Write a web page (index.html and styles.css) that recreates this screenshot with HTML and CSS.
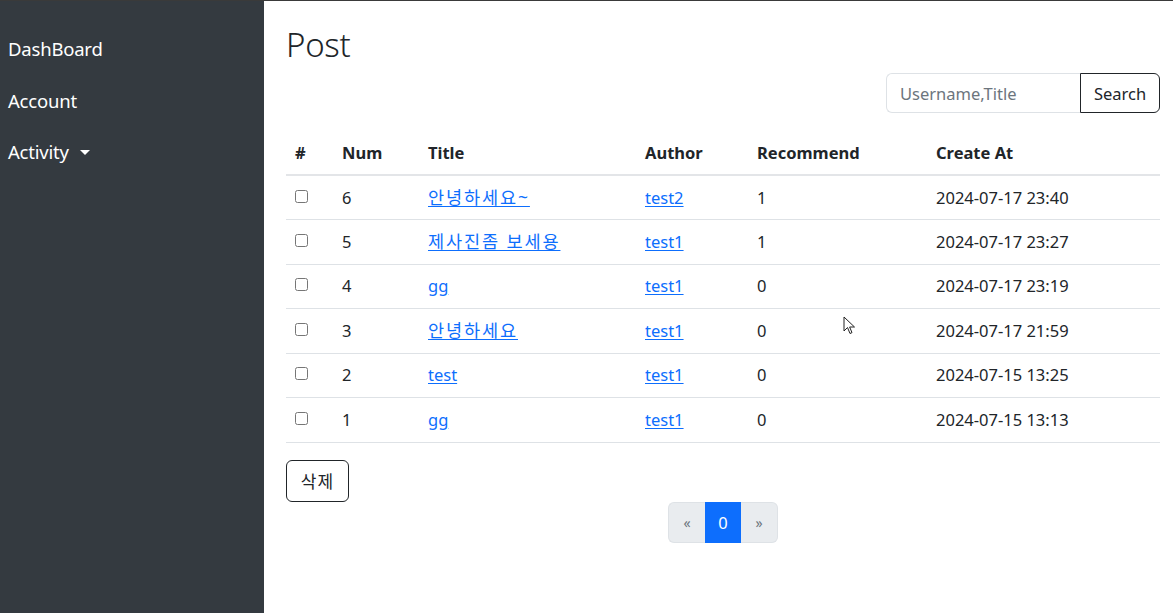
FILE: index.html
```html
<!DOCTYPE html>
<html lang="ko">
<head>
<meta charset="utf-8">
<title>Post</title>
<link rel="stylesheet" href="styles.css">
</head>
<body>
<div class="layout">
  <nav class="sidebar">
    <a class="side-link" href="#">DashBoard</a>
    <a class="side-link" href="#">Account</a>
    <a class="side-link dropdown" href="#">Activity<span class="caret"></span></a>
  </nav>
  <main class="main">
    <h1 class="title">Post</h1>
    <form class="search-row">
      <div class="search-group">
        <input class="search-input" type="text" placeholder="Username,Title">
        <button class="search-btn" type="button">Search</button>
      </div>
    </form>
    <table class="table">
      <thead>
        <tr><th class="c-chk">#</th><th class="c-num">Num</th><th class="c-title">Title</th><th class="c-author">Author</th><th class="c-rec">Recommend</th><th>Create At</th></tr>
      </thead>
      <tbody>
        <tr><td><input type="checkbox" class="chk"></td><td>6</td><td><a class="ko" href="#">안녕하세요~</a></td><td><a href="#">test2</a></td><td>1</td><td>2024-07-17 23:40</td></tr>
        <tr><td><input type="checkbox" class="chk"></td><td>5</td><td><a class="ko" href="#">제사진좀 보세용</a></td><td><a href="#">test1</a></td><td>1</td><td>2024-07-17 23:27</td></tr>
        <tr><td><input type="checkbox" class="chk"></td><td>4</td><td><a href="#">gg</a></td><td><a href="#">test1</a></td><td>0</td><td>2024-07-17 23:19</td></tr>
        <tr><td><input type="checkbox" class="chk"></td><td>3</td><td><a class="ko" href="#">안녕하세요</a></td><td><a href="#">test1</a></td><td>0</td><td>2024-07-17 21:59</td></tr>
        <tr><td><input type="checkbox" class="chk"></td><td>2</td><td><a href="#">test</a></td><td><a href="#">test1</a></td><td>0</td><td>2024-07-15 13:25</td></tr>
        <tr><td><input type="checkbox" class="chk"></td><td>1</td><td><a href="#">gg</a></td><td><a href="#">test1</a></td><td>0</td><td>2024-07-15 13:13</td></tr>
      </tbody>
    </table>
    <div class="actions">
      <button class="delete-btn" type="button">삭제</button>
    </div>
    <ul class="pagination">
      <li class="page disabled">&laquo;</li>
      <li class="page active">0</li>
      <li class="page disabled">&raquo;</li>
    </ul>
  </main>
</div>
<svg class="cursor" width="14" height="20" viewBox="0 0 14 20" aria-hidden="true">
  <path d="M1 1 L1 15 L4.5 11.5 L7 17.5 L9 16.6 L6.6 11 L11.5 11 Z" fill="#fff" stroke="#222" stroke-width="1" stroke-linejoin="round"/>
</svg>
</body>
</html>
```
FILE: styles.css
```css
* { box-sizing: border-box; }
html, body { margin: 0; padding: 0; }
body {
  font-family: "Noto Sans", "Noto Sans CJK KR", sans-serif;
  font-size: 16.5px;
  color: #212529;
  background: #fff;
  border-top: 1px solid #3a3a3a;
  height: 613px;
  overflow: hidden;
  position: relative;
}
.layout {
  display: flex;
  height: 612px;
}
.sidebar {
  width: 264px;
  flex: 0 0 264px;
  background: #343a40;
  display: flex;
  flex-direction: column;
  padding-top: 36px;
}
.side-link {
  color: #fff;
  text-decoration: none;
  font-size: 18.5px;
  line-height: 24px;
  padding: 0 8px;
  height: 51.5px;
  display: flex;
  align-items: flex-start;
  letter-spacing: -0.2px;
}
.caret {
  display: inline-block;
  width: 0;
  height: 0;
  margin-left: 11px;
  margin-top: 10px;
  border-left: 5px solid transparent;
  border-right: 5px solid transparent;
  border-top: 5px solid #fff;
}
.main {
  flex: 1;
  padding: 23px 13px 0 22px;
  display: flex;
  flex-direction: column;
}
.title {
  margin: 0;
  font-size: 33px;
  font-weight: 300;
  line-height: 42px;
  height: 42px;
  letter-spacing: -0.3px;
}
.search-row {
  display: flex;
  justify-content: flex-end;
  margin: 7px 0 0 0;
}
.search-group {
  display: flex;
  height: 40px;
}
.search-input {
  width: 194px;
  height: 40px;
  border: 1px solid #dee2e6;
  border-right: none;
  border-radius: 6px 0 0 6px;
  padding: 0 13px;
  font-family: inherit;
  font-size: 16.5px;
  color: #212529;
  outline: none;
}
.search-input::placeholder { color: #6c757d; }
.search-btn {
  height: 40px;
  width: 80px;
  border: 1px solid #212529;
  border-radius: 0 6px 6px 0;
  background: #fff;
  color: #212529;
  font-family: inherit;
  font-size: 16.5px;
  padding: 0;
}
.table {
  margin-top: 19px;
  width: 100%;
  border-collapse: collapse;
}
.table th, .table td {
  text-align: left;
  padding: 9px 9px;
  line-height: 26px;
  vertical-align: middle;
  border-bottom: 1px solid #dee2e6;
}
.table th {
  font-weight: 700;
  border-bottom: 2px solid #e3e5e8;
  padding: 8px 9px;
}
.table td { height: 44.5px; padding-top: 0; padding-bottom: 0; }
.c-chk { width: 47px; }
.c-num { width: 86px; }
.c-title { width: 217px; }
.c-author { width: 112px; }
.c-rec { width: 179px; }
.table a { color: #0d6efd; text-decoration: underline; text-underline-offset: 2px; }
.table a.ko { font-size: 17.5px; letter-spacing: 1.9px; }
.chk {
  width: 13px;
  height: 13px;
  margin: 0 0 6px 0;
  vertical-align: middle;
}
.actions { margin-top: 17px; display: flex; }
.delete-btn {
  height: 42px;
  width: 63px;
  border: 1px solid #212529;
  border-radius: 6px;
  background: #fff;
  color: #212529;
  font-family: inherit;
  font-size: 17px;
  letter-spacing: 1px;
  padding: 0;
}
.pagination {
  list-style: none;
  margin: 0;
  padding: 0;
  display: flex;
  justify-content: center;
}
.page {
  height: 41px;
  width: 36.5px;
  display: flex;
  align-items: center;
  justify-content: center;
  border: 1px solid #dee2e6;
  font-size: 16.5px;
}
.page.disabled {
  background: #e9ecef;
  color: #6c757d;
  font-size: 14px;
}
.page:first-child { border-radius: 6px 0 0 6px; border-right: none; }
.page:last-child { border-radius: 0 6px 6px 0; border-left: none; }
.page.active {
  background: #0d6efd;
  border-color: #0d6efd;
  color: #fff;
}
.cursor {
  position: absolute;
  left: 843px;
  top: 315px;
}
```
